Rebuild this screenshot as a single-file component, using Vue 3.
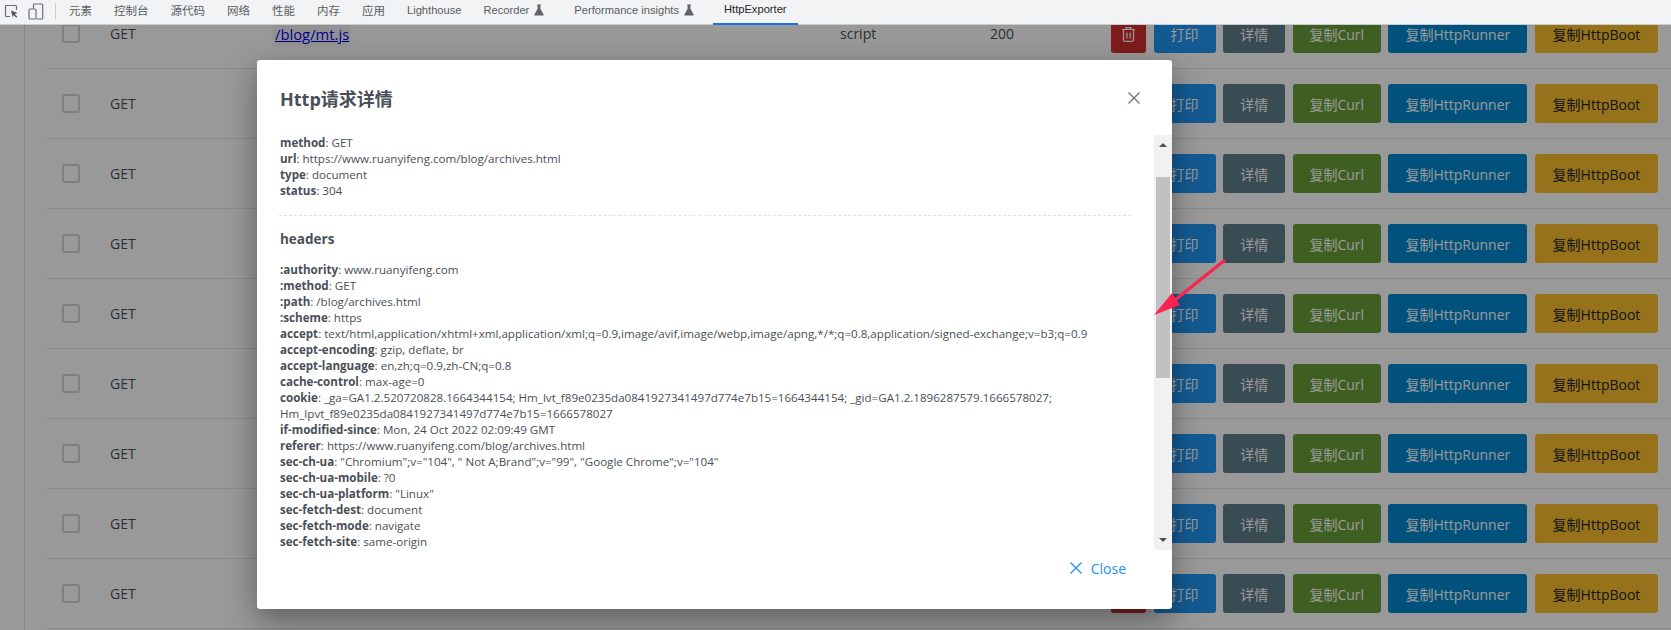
<script setup>
const tabs = [
  { label: '元素' }, { label: '控制台' }, { label: '源代码' }, { label: '网络' }, { label: '性能' },
  { label: '内存' }, { label: '应用' }, { label: 'Lighthouse', latin: true },
  { label: 'Recorder', flask: true, latin: true }, { label: 'Performance insights', flask: true, wide: true, latin: true },
  { label: 'HttpExporter', active: true, latin: true }
]
const rows = Array.from({ length: 9 }, (_, i) => i)
const actions = [
  { label: '打印', cls: 'print' }, { label: '详情', cls: 'detail' }, { label: '复制Curl', cls: 'curl' },
  { label: '复制HttpRunner', cls: 'runner' }, { label: '复制HttpBoot', cls: 'boot' }
]
const general = [
  ['method', 'GET'], ['url', 'https://www.ruanyifeng.com/blog/archives.html'], ['type', 'document'], ['status', '304']
]
const headers = [
  [':authority', 'www.ruanyifeng.com'], [':method', 'GET'], [':path', '/blog/archives.html'], [':scheme', 'https'],
  ['accept', 'text/html,application/xhtml+xml,application/xml;q=0.9,image/avif,image/webp,image/apng,*/*;q=0.8,application/signed-exchange;v=b3;q=0.9'],
  ['accept-encoding', 'gzip, deflate, br'], ['accept-language', 'en,zh;q=0.9,zh-CN;q=0.8'], ['cache-control', 'max-age=0'],
  ['cookie', '_ga=GA1.2.520720828.1664344154; Hm_lvt_f89e0235da0841927341497d774e7b15=1664344154; _gid=GA1.2.1896287579.1666578027; Hm_lpvt_f89e0235da0841927341497d774e7b15=1666578027'],
  ['if-modified-since', 'Mon, 24 Oct 2022 02:09:49 GMT'], ['referer', 'https://www.ruanyifeng.com/blog/archives.html'],
  ['sec-ch-ua', '"Chromium";v="104", " Not A;Brand";v="99", "Google Chrome";v="104"'], ['sec-ch-ua-mobile', '?0'],
  ['sec-ch-ua-platform', '"Linux"'], ['sec-fetch-dest', 'document'], ['sec-fetch-mode', 'navigate'], ['sec-fetch-site', 'same-origin']
]
</script>

<template>
  <div class="page">
    <header class="toolbar">
      <div class="tool-icons">
        <svg class="tool" width="16" height="16" viewBox="0 0 16 16" fill="none">
          <path d="M7 13.5H3.5a1 1 0 0 1-1-1v-9a1 1 0 0 1 1-1h9a1 1 0 0 1 1 1V7" stroke="#6b6f74" stroke-width="1.2" />
          <path d="M8 7.5l6.5 2.6-2.7 1 2.4 2.6-1 1-2.5-2.6-1 2.6z" fill="#54585d" />
        </svg>
        <svg class="tool device" width="16" height="17" viewBox="0 0 16 17" fill="none">
          <path d="M5.5 1h8a1.2 1.2 0 0 1 1.2 1.2v12.6a1.2 1.2 0 0 1-1.2 1.2H8.5" stroke="#6b6f74" stroke-width="1.2" />
          <rect x="1" y="6" width="7" height="10" rx="1.2" stroke="#6b6f74" stroke-width="1.2" />
          <path d="M5.5 1v4.5" stroke="#6b6f74" stroke-width="1.2" />
        </svg>
        <span class="sep"></span>
      </div>
      <nav class="tabs">
        <span v-for="t in tabs" :key="t.label" class="tab" :class="{ active: t.active, wide: t.wide, latin: t.latin }">
          {{ t.label }}
          <svg v-if="t.flask" class="flask" width="10" height="12" viewBox="0 0 10 12">
            <path d="M3 .5h4v1H6.4v3.2L9.6 10.4a.8.8 0 0 1-.7 1.2H1.1a.8.8 0 0 1-.7-1.2L3.6 4.7V1.5H3z" fill="#5f6368" />
          </svg>
        </span>
      </nav>
    </header>

    <main class="list-wrap">
      <div class="list">
        <div v-for="r in rows" :key="r" class="row">
          <span class="check"></span>
          <span>GET</span>
          <template v-if="r === 0">
            <a class="path" href="#">/blog/mt.js</a>
            <span>script</span>
            <span>200</span>
          </template>
          <template v-else>
            <span></span>
            <span></span>
            <span></span>
          </template>
          <div class="actions">
            <button class="btn trash" aria-label="删除">
              <svg width="15" height="16" viewBox="0 0 15 16" fill="none" stroke="#fff" stroke-width="1.2">
                <path d="M1 3.5h13M5 3.5V1.6h5v1.9M2.5 3.5v10.6a1.2 1.2 0 0 0 1.2 1.2h7.6a1.2 1.2 0 0 0 1.2-1.2V3.5M5.9 6.5v6M9.1 6.5v6" />
              </svg>
            </button>
            <button v-for="a in actions" :key="a.cls" class="btn" :class="a.cls">{{ a.label }}</button>
          </div>
        </div>
      </div>
    </main>

    <div class="mask">
      <section class="dialog">
        <div class="dialog-head">
          <h2>Http请求详情</h2>
          <svg width="14" height="14" viewBox="0 0 14 14" stroke="#6c757d" stroke-width="1.3" fill="none">
            <path d="M1.5 1.5l11 11M12.5 1.5l-11 11" />
          </svg>
        </div>
        <div class="dialog-body">
          <div class="content">
            <div v-for="g in general" :key="g[0]"><b>{{ g[0] }}</b>: {{ g[1] }}</div>
            <hr />
            <h3>headers</h3>
            <div v-for="h in headers" :key="h[0]"><b>{{ h[0] }}</b>: {{ h[1] }}</div>
          </div>
          <div class="scrollbar">
            <span class="arrow up"></span>
            <span class="thumb"></span>
            <span class="arrow down"></span>
          </div>
        </div>
        <div class="dialog-foot">
          <svg width="14" height="14" viewBox="0 0 14 14" stroke="#2196f3" stroke-width="1.4" fill="none">
            <path d="M1.5 1.5l11 11M12.5 1.5l-11 11" />
          </svg>
          <span>Close</span>
        </div>
      </section>
    </div>

    <svg class="annotation" width="1671" height="630" viewBox="0 0 1671 630">
      <path d="M1225 260L1170 304" stroke="#f9244f" stroke-width="3.2" fill="none" />
      <path d="M1154 315L1172 293L1180 305Z" fill="#f9244f" />
    </svg>
  </div>
</template>

<style>
html, body { margin: 0; background: #fff; overflow: hidden; }
</style>

<style scoped>
.page {
  position: relative;
  width: 1671px;
  height: 630px;
  overflow: hidden;
  font-family: "Open Sans", "Noto Sans CJK SC", sans-serif;
  color: #495057;
  background: #fff;
}
.toolbar {
  position: relative;
  z-index: 3;
  display: flex;
  align-items: flex-start;
  height: 24px;
  background: #f1f3f5;
  border-bottom: 1px solid #c9cbcf;
  font-family: "Liberation Sans", "Noto Sans CJK SC", sans-serif;
  font-size: 11.5px;
  color: #5a5e63;
}
.tool-icons {
  display: flex;
  align-items: center;
  height: 22px;
  padding-left: 3px;
}
.tool { display: block; }
.device { margin-left: 9px; }
.sep {
  width: 1px;
  height: 16px;
  background: #c9ccd0;
  margin-left: 11px;
}
.tabs { display: flex; margin-left: 2px; }
.tab {
  display: flex;
  align-items: center;
  gap: 5px;
  height: 20px;
  padding: 0 11px;
  white-space: nowrap;
}
.tab.latin { font-size: 11.15px; }
.tab.wide { padding-left: 19px; padding-right: 19px; }
.tab.active {
  align-items: flex-start;
  box-sizing: content-box;
  height: 20px;
  padding: 3px 11px 0;
  color: #26282b;
  border-bottom: 2px solid #1a73e8;
}
.flask { display: block; }
.list-wrap {
  height: 605px;
  margin-left: 24px;
  padding-left: 22px;
  border-left: 1px solid #e3e5e7;
  overflow: hidden;
}
.list { margin-top: -26px; }
.row {
  display: grid;
  grid-template-columns: 48px 165px 565px 150px 121px auto;
  align-items: center;
  height: 70px;
  box-sizing: border-box;
  padding: 0 13px 0 15px;
  border-bottom: 1px solid #e3e5e7;
  font-size: 14px;
  white-space: nowrap;
}
.check {
  width: 18px;
  height: 19px;
  box-sizing: border-box;
  border: 2px solid #d0d5da;
  border-radius: 3px;
  background: #fff;
}
.path {
  justify-self: start;
  color: #0000ee;
  font-size: 14.8px;
  text-decoration: underline;
  background: #f2f2f2;
  box-shadow: 0 0 6px rgba(0, 0, 0, 0.1);
}
.actions { display: flex; gap: 7.6px; }
.btn {
  height: 39px;
  padding: 0;
  border: 0;
  border-radius: 3px;
  font: 14px "Open Sans", "Noto Sans CJK SC", sans-serif;
  color: #fff;
  display: flex;
  align-items: center;
  justify-content: center;
}
.trash { width: 35px; background: #d32f2f; }
.print { width: 62px; background: #2196f3; }
.detail { width: 62px; background: #607d8b; }
.curl { width: 88px; background: #689f38; }
.runner { width: 139px; background: #0288d1; }
.boot { width: 123px; background: #fbc02d; color: #212529; }
.mask {
  position: absolute;
  inset: 25px 0 0 0;
  z-index: 2;
  box-sizing: border-box;
  padding: 35px 0 0 257px;
  background: rgba(0, 0, 0, 0.4);
}
.dialog {
  display: flex;
  flex-direction: column;
  width: 915px;
  height: 549px;
  background: #fff;
  border-radius: 3px;
  box-shadow: 0 10px 30px rgba(0, 0, 0, 0.4);
}
.dialog-head {
  display: flex;
  align-items: center;
  justify-content: space-between;
  height: 75px;
  flex: none;
  padding: 0 31px 0 23px;
}
.dialog-head h2 {
  margin: 0;
  font-size: 18px;
  font-weight: 700;
  color: #495057;
}
.dialog-body {
  display: flex;
  height: 415px;
  flex: none;
}
.content {
  flex: 1;
  min-width: 0;
  padding: 0 23px;
  overflow: hidden;
  font-size: 11.6px;
  line-height: 16px;
}
.content b { font-weight: 700; }
.content hr {
  margin: 16px 0 14px -1px;
  border: 0;
  border-top: 1px dashed #dee2e6;
}
.content h3 {
  margin: 0 0 14px;
  font-size: 13.5px;
  line-height: 18px;
  font-weight: 700;
}
.scrollbar {
  display: flex;
  flex-direction: column;
  align-items: center;
  width: 18px;
  flex: none;
  background: #f1f1f1;
}
.arrow { width: 0; height: 0; border-left: 4px solid transparent; border-right: 4px solid transparent; }
.up { margin-top: 8px; border-bottom: 4px solid #505050; }
.down { margin-top: auto; margin-bottom: 8px; border-top: 4px solid #505050; }
.thumb { width: 14px; height: 201px; margin-top: 30px; background: #c1c1c1; }
.dialog-foot {
  display: flex;
  align-items: center;
  justify-content: flex-end;
  gap: 8px;
  height: 59px;
  padding: 0 46px 23px 0;
  box-sizing: border-box;
  font-size: 14px;
  color: #2196f3;
}
.annotation {
  position: absolute;
  top: 0;
  left: 0;
  z-index: 4;
  pointer-events: none;
}
</style>
